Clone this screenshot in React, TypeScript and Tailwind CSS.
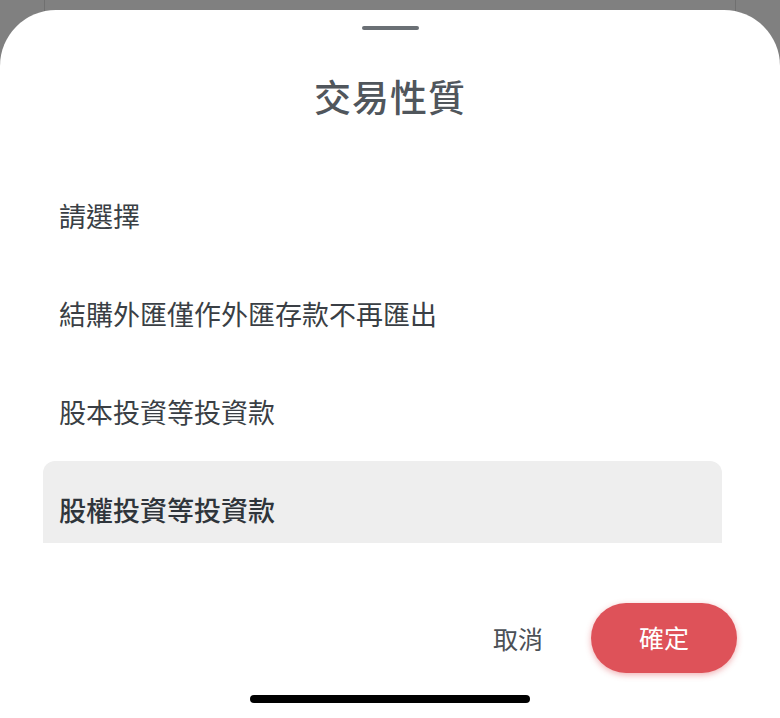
import React from "react";

const items = [
  "請選擇",
  "結購外匯僅作外匯存款不再匯出",
  "股本投資等投資款",
  "股權投資等投資款",
];

export default function App() {
  const font = { fontFamily: '"Noto Sans CJK TC", "Noto Sans", sans-serif' };
  return (
    <div className="relative h-[718px] w-[780px] overflow-hidden bg-[#808080] pt-[10px]" style={font}>
      <div className="absolute left-[44px] top-0 h-[40px] w-[692px] border-x border-[#707070]" />
      <div className="relative flex h-[708px] flex-col rounded-t-[56px] bg-white">
        <div className="mx-auto mt-[16px] h-[4px] w-[57px] rounded-full bg-[#6b7075]" />
        <div className="mt-[40px] text-center text-[37px] font-medium leading-[52px] tracking-[1px] text-[#50565c]">
          交易性質
        </div>
        <div className="mt-[45px] ml-[43px] mr-[58px] h-[376px] overflow-hidden">
          {items.map((t, i) => (
            <div
              key={t}
              className={
                i === 3
                  ? "flex h-[98px] items-center rounded-[12px] bg-[#eeeeee] pl-[16px] text-[27px] font-medium text-[#2f353b]"
                  : "flex h-[98px] items-center pl-[16px] text-[27px] text-[#3a3f45]"
              }
            >
              {t}
            </div>
          ))}
        </div>
        <div className="mt-[60px] flex items-center justify-end gap-[48px] pr-[43px]">
          <button className="text-[25px] leading-[70px] text-[#4b5056]">取消</button>
          <button className="h-[70px] w-[146px] rounded-full bg-[#de5259] text-[25px] text-white shadow-[0_2px_6px_rgba(222,82,89,0.45)]">
            確定
          </button>
        </div>
        <div className="mx-auto mt-[22px] h-[8px] w-[280px] rounded-full bg-black" />
      </div>
    </div>
  );
}
